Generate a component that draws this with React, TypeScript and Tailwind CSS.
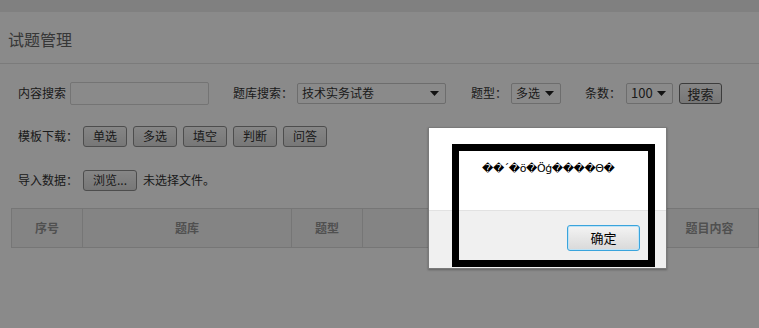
import React from 'react';

const font = { fontFamily: '"Noto Sans CJK SC", "Liberation Sans", sans-serif' };

const Caret = () => (
    <svg width="9" height="5" viewBox="0 0 9 5" className="ml-auto">
        <path d="M0 0h9L4.5 5z" fill="#222" />
    </svg>
);

const FakeSelect: React.FC<{ value: string; className: string }> = ({ value, className }) => (
    <div className={`flex items-center h-[21px] border border-[#c9c9c9] rounded-[2px] bg-white pl-[4px] pr-[6px] text-[12px] text-[#333] ${className}`}>
        <span>{value}</span>
        <Caret />
    </div>
);

const Btn: React.FC<{ label: string; className?: string }> = ({ label, className = '' }) => (
    <button className={`h-[21px] px-0 border border-[#8f8f8f] rounded-[3px] bg-gradient-to-b from-[#f8f8f8] to-[#dcdcdc] text-[12px] text-[#333] leading-none ${className}`}>
        {label}
    </button>
);

const App: React.FC = () => {
    const templates = ['单选', '多选', '填空', '判断', '问答'];

    return (
        <div className="relative w-[759px] h-[328px] overflow-hidden bg-white text-[12px]" style={font}>
            <div className="h-[12px] bg-[#ececec]" />
            <div className="h-[52px] flex items-center pl-[8px] pt-[3px] border-b border-[#e3e3e3] text-[16px] text-[#666]">
                试题管理
            </div>

            <div className="pl-[18px] pt-[18px] text-[#333]">
                <div className="flex items-center h-[22px]">
                    <span>内容搜索</span>
                    <div className="ml-[4px] w-[139px] h-[23px] border border-[#d6d6d6] rounded-[2px] bg-white" />
                    <span className="ml-[24px]">题库搜索：</span>
                    <FakeSelect value="技术实务试卷" className="ml-[4px] w-[149px]" />
                    <span className="ml-[25px]">题型：</span>
                    <FakeSelect value="多选" className="ml-[4px] w-[50px]" />
                    <span className="ml-[24px]">条数：</span>
                    <FakeSelect value="100" className="ml-[5px] w-[47px] !text-[13px]" />
                    <Btn label="搜索" className="ml-[6px] w-[43px] !border-[#6f6f6f] !text-[13px]" />
                </div>

                <div className="flex items-center h-[22px] mt-[21px]">
                    <span>模板下载：</span>
                    <div className="flex gap-[6px] ml-[5px]">
                        {templates.map(t => (
                            <Btn key={t} label={t} className="w-[44px]" />
                        ))}
                    </div>
                </div>

                <div className="flex items-center h-[22px] mt-[22px]">
                    <span>导入数据：</span>
                    <Btn label="浏览..." className="ml-[5px] w-[54px]" />
                    <span className="ml-[6px]">未选择文件。</span>
                </div>
            </div>

            <div className="ml-[11px] mt-[17px] flex h-[40px] border border-[#dadada] bg-[#f4f4f4] text-[12px] font-bold text-[#959595]">
                <div className="w-[71px] flex items-center justify-center border-r border-[#dadada]">序号</div>
                <div className="w-[209px] flex items-center justify-center border-r border-[#dadada]">题库</div>
                <div className="w-[71px] flex items-center justify-center border-r border-[#dadada]">题型</div>
                <div className="w-[298px] border-r border-[#dadada]" />
                <div className="flex-1 flex items-center justify-center">题目内容</div>
            </div>

            {/* modal backdrop */}
            <div className="absolute inset-0 bg-black/[0.46]" />

            <div className="absolute left-[428px] top-[127px] w-[239px] h-[142px] bg-white border border-[#7a7a7a] shadow-[0_1px_2px_rgba(0,0,0,0.3)] flex flex-col">
                <div className="h-[82px] pl-[53px] pt-[33px] text-[11px] tracking-[-0.4px] text-black" style={{ fontFamily: '"DejaVu Sans", sans-serif' }}>
                    ��´�ö�Öģ����Θ�
                </div>
                <div className="flex-1 bg-[#f0f0f0] border-t border-[#e2e2e2] flex justify-end items-start pt-[14px] pr-[26px]">
                    <button className="w-[73px] h-[26px] rounded-[3px] border border-[#3aa4dc] bg-gradient-to-b from-[#f4f4f4] to-[#d9d9d9] text-[13px] text-black shadow-[inset_0_0_0_1px_#bfe3f6]">
                        确定
                    </button>
                </div>
                <div className="absolute left-[23px] top-[16px] w-[203px] h-[123px] border-[7px] border-black" />
            </div>
        </div>
    );
};

export default App;
